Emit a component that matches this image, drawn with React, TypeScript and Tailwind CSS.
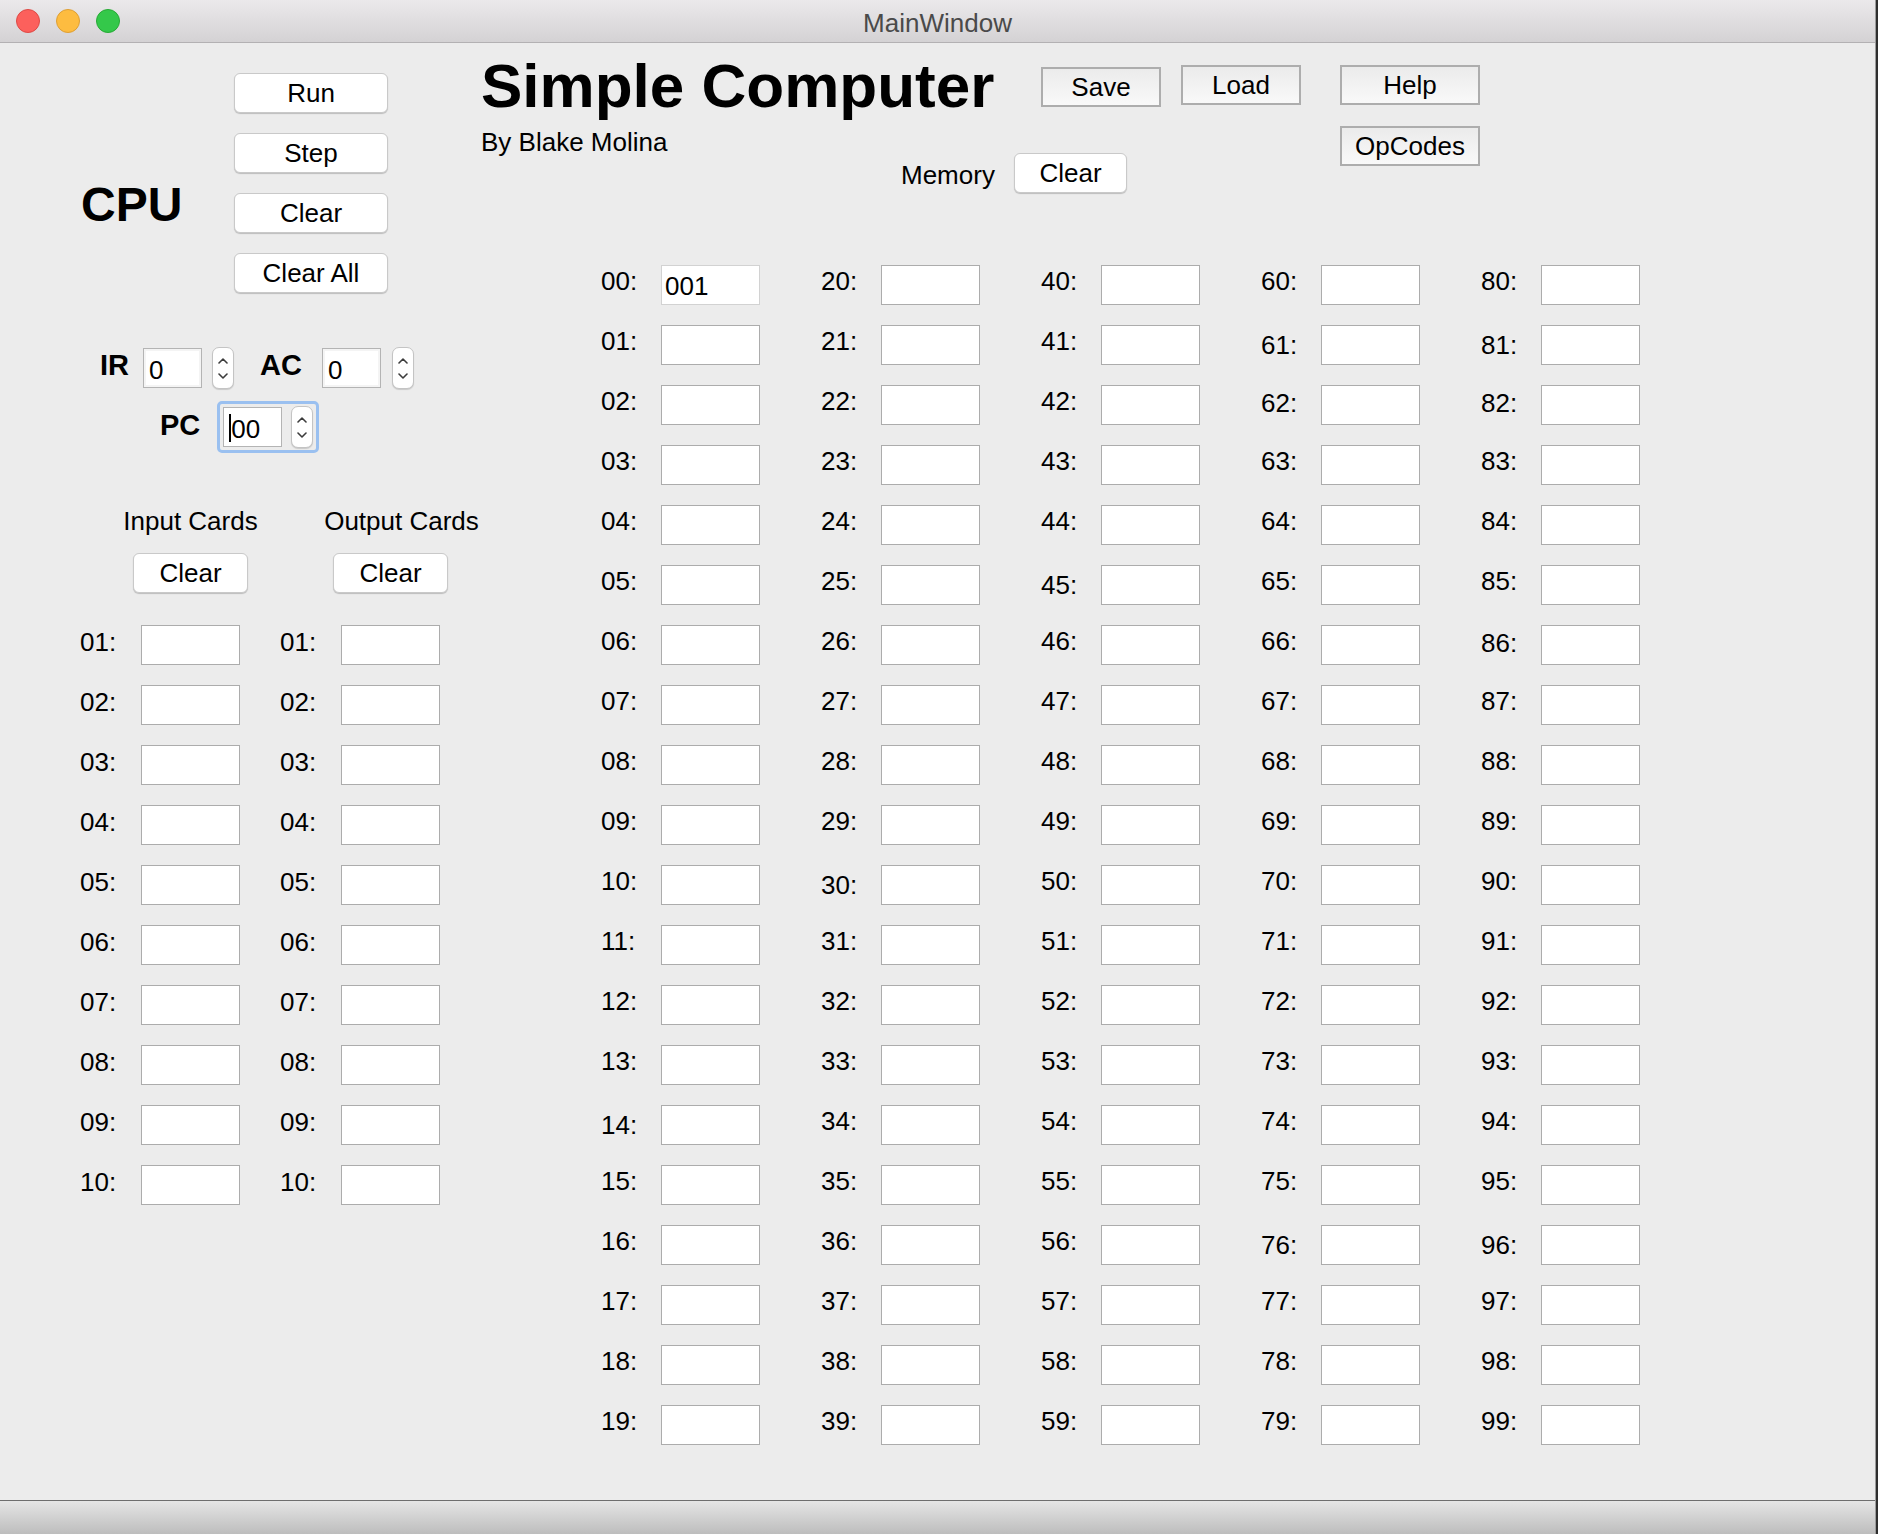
const FONT = 'font-[family-name:Liberation_Sans,Arial,sans-serif]';

const lowLabels: Record<number, string> = {
  14: 'mb-[1px]',
  30: 'mb-[1px]',
  45: 'mb-[1px]',
  61: 'mb-[1px]',
  81: 'mb-[1px]',
  76: 'mb-[1px]',
  96: 'mb-[1px]',
  62: 'mb-[4px]',
  82: 'mb-[4px]',
  86: 'mb-[4px]',
};

function pad(n: number) {
  return n.toString().padStart(2, '0');
}

function PushButton({ label, className = '' }: { label: string; className?: string }) {
  return (
    <button
      className={`h-[40px] rounded-[6px] bg-white border border-[#c9c9c9] shadow-[0_1px_1px_rgba(0,0,0,0.2)] text-[26px] leading-none text-black flex items-center justify-center ${className}`}
    >
      {label}
    </button>
  );
}

function SquareButton({ label, className = '' }: { label: string; className?: string }) {
  return (
    <button
      className={`h-[40px] border-2 border-[#adadad] bg-linear-to-b from-[#ebebeb] to-[#f9f9f9] text-[26px] leading-none text-black flex items-center justify-center ${className}`}
    >
      {label}
    </button>
  );
}

function Field({ value = '', light = false, w = 'w-[99px]' }: { value?: string; light?: boolean; w?: string }) {
  return (
    <input
      readOnly
      value={value}
      className={`${w} h-[40px] shrink-0 bg-white border ${light ? 'border-[#d2d2d2]' : 'border-[#acacac]'} px-[3px] pt-[3px] text-[26px] text-black outline-none`}
    />
  );
}

function Spinner() {
  return (
    <div className="w-[22px] h-[42px] shrink-0 rounded-[7px] bg-white border border-[#c4c4c4] shadow-[0_1px_1px_rgba(0,0,0,0.15)] flex flex-col items-center justify-center gap-[9px]">
      <svg width="10" height="6" viewBox="0 0 10 6" fill="none">
        <path d="M1 5L5 1L9 5" stroke="#3c3c3c" strokeWidth="1.6" strokeLinecap="round" strokeLinejoin="round" />
      </svg>
      <svg width="10" height="6" viewBox="0 0 10 6" fill="none">
        <path d="M1 1L5 5L9 1" stroke="#3c3c3c" strokeWidth="1.6" strokeLinecap="round" strokeLinejoin="round" />
      </svg>
    </div>
  );
}

function RegBox({ value }: { value: string }) {
  return (
    <div className="w-[59px] h-[40px] shrink-0 bg-white border border-[#b4b4b4] shadow-[inset_0_0_0_2px_#f4f4f4] px-[5px] pt-[3px] text-[26px] leading-[36px] text-black">
      {value}
    </div>
  );
}

function TitleBar() {
  return (
    <div className="h-[43px] shrink-0 grid grid-cols-[1fr_auto_1fr] items-center border-b border-[#b3b1b3] bg-linear-to-b from-[#ebe9eb] to-[#d4d2d4]">
      <div className="flex items-center gap-[16px] pl-[16px]">
        <span className="w-[24px] h-[24px] rounded-full bg-[#fc605c] border border-[#de4a45]" />
        <span className="w-[24px] h-[24px] rounded-full bg-[#fdbc40] border border-[#de9f34]" />
        <span className="w-[24px] h-[24px] rounded-full bg-[#34c84a] border border-[#27aa35]" />
      </div>
      <div className="mt-[4px] text-[26px] leading-none text-[#4a4a4a]">MainWindow</div>
      <div />
    </div>
  );
}

function CardColumn({ title, titleShift }: { title: string; titleShift: string }) {
  return (
    <div className="w-[200px] flex flex-col">
      <div className={`${titleShift} w-[99px] h-[30px] flex justify-center`}>
        <span className="whitespace-nowrap text-[26px] leading-[30px]">{title}</span>
      </div>
      <PushButton label="Clear" className="ml-[53px] w-[115px] mt-[17px]" />
      <div className="mt-[32px] flex flex-col gap-[20px]">
        {Array.from({ length: 10 }, (_, i) => (
          <div key={i} className="flex items-center h-[40px]">
            <span className="w-[61px] text-[26px] leading-none mb-[7px]">{pad(i + 1)}:</span>
            <Field />
          </div>
        ))}
      </div>
    </div>
  );
}

function LeftPanel() {
  return (
    <div className="w-[481px] shrink-0 flex flex-col">
      <div className="flex">
        <div className="w-[234px] pl-[81px] pt-[138px]">
          <span className="text-[48px] leading-[48px] font-bold">CPU</span>
        </div>
        <div className="w-[154px] pt-[30px] flex flex-col gap-[20px]">
          <PushButton label="Run" />
          <PushButton label="Step" />
          <PushButton label="Clear" />
          <PushButton label="Clear All" />
        </div>
      </div>

      <div className="mt-[54px] pl-[100px] h-[42px] flex items-center">
        <span className="text-[29px] font-bold leading-none mb-[6px]">IR</span>
        <div className="ml-[14px]">
          <RegBox value="0" />
        </div>
        <div className="ml-[10px]">
          <Spinner />
        </div>
        <span className="ml-[26px] text-[29px] font-bold leading-none mb-[6px]">AC</span>
        <div className="ml-[20px]">
          <RegBox value="0" />
        </div>
        <div className="ml-[11px]">
          <Spinner />
        </div>
      </div>

      <div className="mt-[12px] pl-[160px] flex items-center">
        <span className="text-[29px] font-bold leading-none mb-[4px]">PC</span>
        <div className="ml-[17px] border-[3px] border-[#9ac0f0] rounded-[5px] px-[3px] py-[2px] flex items-center gap-[9px]">
          <div className="w-[59px] h-[40px] bg-white border border-[#b4b4b4] px-[5px] pt-[3px] text-[26px] leading-[36px] text-black flex items-center">
            <span className="w-[2px] h-[28px] bg-black mb-[2px]" />
            <span>00</span>
          </div>
          <Spinner />
        </div>
      </div>

      <div className="mt-[53px] pl-[80px] flex">
        <CardColumn title="Input Cards" titleShift="ml-[61px]" />
        <CardColumn title="Output Cards" titleShift="ml-[72px]" />
      </div>
    </div>
  );
}

function RightPanel() {
  return (
    <div className="flex-1 flex flex-col">
      <div className="h-[222px] flex">
        <div className="w-[420px] pt-[12px]">
          <div className="whitespace-nowrap text-[62px] leading-[62px] font-bold text-black">Simple Computer</div>
          <div className="mt-[10px] text-[26px] leading-[30px] whitespace-nowrap">By Blake Molina</div>
        </div>
        <div className="w-[439px] flex flex-col">
          <div className="flex items-start pt-[22px]">
            <SquareButton label="Save" className="ml-[140px] w-[120px] mt-[2px]" />
            <SquareButton label="Load" className="ml-[20px] w-[120px]" />
          </div>
          <div className="mt-[46px] flex items-center">
            <span className="w-[113px] text-[26px] leading-none mt-[4px]">Memory</span>
            <PushButton label="Clear" className="w-[113px] h-[39px]" />
          </div>
        </div>
        <div className="flex flex-col pt-[22px] gap-[21px]">
          <SquareButton label="Help" className="w-[140px]" />
          <SquareButton label="OpCodes" className="w-[140px]" />
        </div>
      </div>

      <div className="ml-[120px] flex">
        {Array.from({ length: 5 }, (_, c) => (
          <div key={c} className="w-[220px] flex flex-col gap-[20px]">
            {Array.from({ length: 20 }, (_, r) => {
              const n = c * 20 + r;
              return (
                <div key={n} className="flex items-center h-[40px]">
                  <span className={`w-[60px] text-[26px] leading-none ${lowLabels[n] ?? 'mb-[9px]'}`}>{pad(n)}:</span>
                  <Field value={n === 0 ? '001' : ''} light={n === 0} />
                </div>
              );
            })}
          </div>
        ))}
      </div>
    </div>
  );
}

export default function App() {
  return (
    <div className={`w-[1878px] h-[1534px] flex bg-[#2e2e2e] text-black ${FONT}`}>
      <div className="w-[1876px] h-full flex flex-col bg-[#ececec] border-r border-[#9c9c9c]">
        <TitleBar />
        <div className="flex-1 flex">
          <LeftPanel />
          <RightPanel />
        </div>
        <div className="h-[34px] shrink-0 border-t border-[#6e6e6e] bg-linear-to-b from-[#e5e5e5] to-[#bdbdbd]" />
      </div>
    </div>
  );
}
